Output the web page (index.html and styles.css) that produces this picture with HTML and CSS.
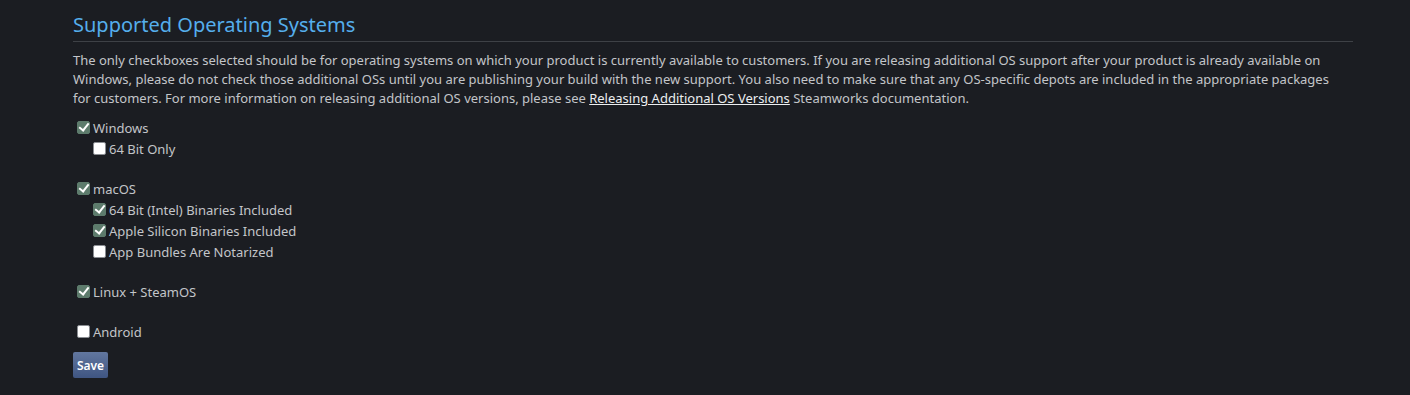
FILE: index.html
```html
<!DOCTYPE html>
<html>
<head>
<meta charset="utf-8">
<link rel="stylesheet" href="styles.css">
</head>
<body>
<div class="page">
  <h2 class="title">Supported Operating Systems</h2>
  <p class="desc">The only checkboxes selected should be for operating systems on which your product is currently available to customers. If you are releasing additional OS support after your product is already available on Windows, please do not check those additional OSs until you are publishing your build with the new support. You also need to make sure that any OS-specific depots are included in the appropriate packages for customers. For more information on releasing additional OS versions, please see <a href="#" class="link">Releasing Additional OS Versions</a> Steamworks documentation.</p>
  <div class="groups">
    <div class="group">
      <label class="row"><input type="checkbox" class="cb" checked>Windows</label>
      <label class="row sub"><input type="checkbox" class="cb">64 Bit Only</label>
    </div>
    <div class="group">
      <label class="row"><input type="checkbox" class="cb" checked>macOS</label>
      <label class="row sub"><input type="checkbox" class="cb" checked>64 Bit (Intel) Binaries Included</label>
      <label class="row sub"><input type="checkbox" class="cb" checked>Apple Silicon Binaries Included</label>
      <label class="row sub"><input type="checkbox" class="cb">App Bundles Are Notarized</label>
    </div>
    <div class="group">
      <label class="row"><input type="checkbox" class="cb" checked>Linux + SteamOS</label>
    </div>
    <div class="group">
      <label class="row"><input type="checkbox" class="cb">Android</label>
    </div>
  </div>
  <button class="save">Save</button>
</div>
</body>
</html>
```
FILE: styles.css
```css
html, body {
  margin: 0;
  padding: 0;
  background: #1b1d22;
}
body {
  font-family: "Noto Sans", "Open Sans", sans-serif;
  color: #c3c5c9;
  font-size: 13px;
}
.page {
  width: 1280px;
  padding: 11px 0 0 73px;
}
.title {
  margin: 0;
  font-size: 20px;
  font-weight: 400;
  color: #55aeec;
  line-height: 28px;
  padding-bottom: 2px;
  border-bottom: 1px solid #3e4146;
}
.desc {
  width: 1262px;
  margin: 9px 0 0;
  line-height: 19px;
}
.link {
  color: #eceef0;
  font-weight: 400;
  text-decoration: underline;
}
.groups {
  margin-top: 9px;
  display: flex;
  flex-direction: column;
  gap: 19px;
}
.group {
  display: flex;
  flex-direction: column;
}
.row {
  display: flex;
  align-items: center;
  height: 21px;
  padding-left: 4px;
}
.row.sub {
  padding-left: 20px;
}
.cb {
  appearance: none;
  -webkit-appearance: none;
  width: 13px;
  height: 13px;
  margin: 0 3px 0 0;
  background: #ffffff;
  border: 1px solid #8a8d92;
  border-radius: 2px;
  box-sizing: border-box;
  position: relative;
  flex: none;
}
.cb:checked {
  background: #5d7b6c;
  border-color: #5d7b6c;
}
.cb:checked::after {
  content: "";
  position: absolute;
  left: 3px;
  top: -1px;
  width: 4px;
  height: 8px;
  border: solid #ffffff;
  border-width: 0 2.5px 2.5px 0;
  transform: rotate(38deg);
}
.save {
  margin-top: 10px;
  width: 35px;
  height: 26px;
  padding: 0;
  border: none;
  border-radius: 2px;
  background: linear-gradient(to bottom, #62779f, #3f5582);
  color: #ffffff;
  font-family: "Noto Sans", sans-serif;
  font-size: 12px;
  font-weight: 600;
  cursor: pointer;
}
```
